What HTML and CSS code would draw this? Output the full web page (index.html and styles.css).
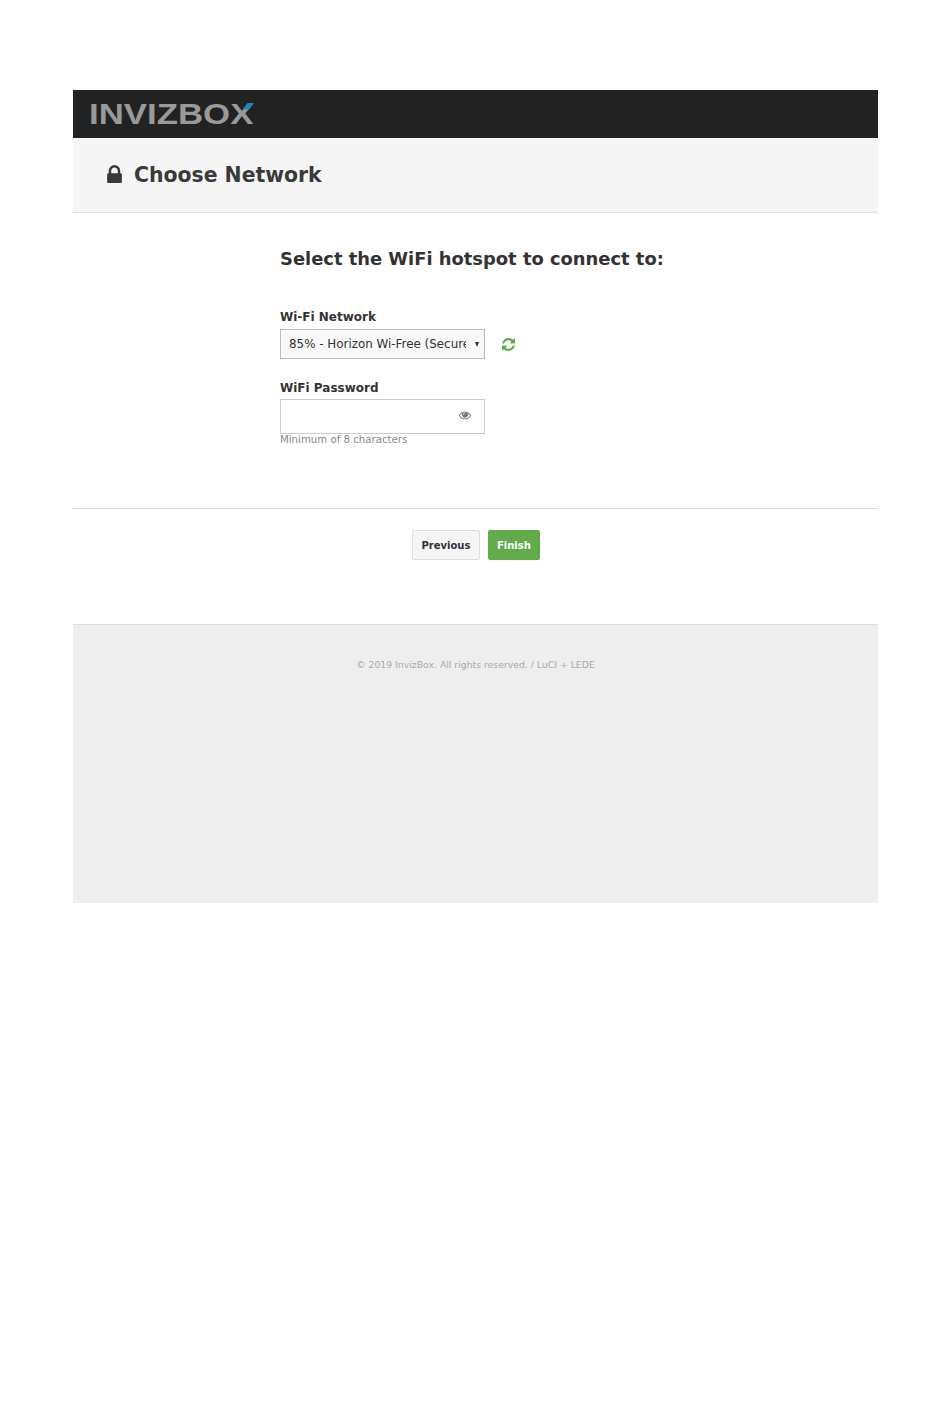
FILE: index.html
```html
<!DOCTYPE html>
<html lang="en">
<head>
    <meta charset="UTF-8">
    <meta name="viewport" content="width=device-width, initial-scale=1.0">
    <title>Choose Network</title>
    <link rel="stylesheet" href="styles.css">
</head>
<body>
    <div class="wrapper">
        <header class="topbar">
            <div class="logo">INVIZBOX<span class="logo-accent"></span></div>
        </header>

        <div class="title-band">
            <svg class="lock-icon" viewBox="0 128 1152 1408" width="15" height="18" aria-hidden="true">
                <path fill="#3a3a3a" d="M320 768h512v-192q0-106-75-181t-181-75-181 75-75 181v192zm832 96v576q0 40-28 68t-68 28h-960q-40 0-68-28t-28-68v-576q0-40 28-68t68-28h32v-192q0-184 132-316t316-132 316 132 132 316v192h32q40 0 68 28t28 68z"/>
            </svg>
            <h1>Choose Network</h1>
        </div>

        <form class="network-form">
            <h2>Select the WiFi hotspot to connect to:</h2>

            <label class="field-label" for="network">Wi-Fi Network</label>
            <div class="network-row">
                <div class="select-box" id="network">
                    <span class="select-text">85% - Horizon Wi-Free (Secured)</span>
                    <span class="select-arrow"></span>
                </div>
                <svg class="refresh-icon" viewBox="0 0 1536 1536" width="13" height="13" aria-hidden="true">
                    <path fill="#62ab4b" d="M1511 928q0 5-1 7-64 268-268 434.500t-478 166.500q-146 0-282.500-55t-243.500-157l-129 129q-19 19-45 19t-45-19-19-45v-448q0-26 19-45t45-19h448q26 0 45 19t19 45-19 45l-137 137q71 66 161 102t187 36q134 0 250-65t186-179q11-17 53-117 8-23 30-23h192q13 0 22.500 9.500t9.500 22.500zm25-800v448q0 26-19 45t-45 19h-448q-26 0-45-19t-19-45 19-45l138-138q-148-137-349-137-134 0-250 65t-186 179q-11 17-53 117-8 23-30 23h-199q-13 0-22.500-9.500t-9.500-22.500v-7q65-268 270-434.500t480-166.500q146 0 284 55.500t245 156.500l130-129q19-19 45-19t45 19 19 45z"/>
                </svg>
            </div>

            <label class="field-label field-label-tight" for="password">WiFi Password</label>
            <div class="password-box">
                <input type="password" id="password">
                <svg class="eye-icon" viewBox="0 320 1792 1280" width="12" height="9" aria-hidden="true">
                    <path fill="#777" d="M1664 960q-152-236-381-353 61 104 61 225 0 185-131.500 316.500t-316.500 131.500-316.500-131.500-131.500-316.500q0-121 61-225-229 117-381 353 133 205 333.500 326.500t434.500 121.500 434.500-121.500 333.500-326.500zm-720-384q0-20-14-34t-34-14q-125 0-214.500 89.500t-89.500 214.500q0 20 14 34t34 14 34-14 14-34q0-86 61-147t147-61q20 0 34-14t14-34zm848 384q0 34-20 69-140 230-376.500 368.500t-499.500 138.500-499.500-139-376.500-368q-20-35-20-69t20-69q140-229 376.500-368t499.500-139 499.500 139 376.500 368q20 35 20 69z"/>
                </svg>
            </div>
            <div class="hint">Minimum of 8 characters</div>
        </form>

        <div class="actions">
            <button type="button" class="btn btn-default">Previous</button>
            <button type="button" class="btn btn-success">Finish</button>
        </div>

        <footer class="footer">© 2019 InvizBox. All rights reserved. / LuCI + LEDE</footer>
    </div>
</body>
</html>
```

FILE: styles.css
```css
body {
    margin: 0;
    background-color: #fff;
    color: #333;
    font-family: 'DejaVu Sans', sans-serif;
}

.wrapper {
    width: 805px;
    margin: 90px 0 0 73px;
}

.topbar {
    height: 48px;
    background-color: #222;
    padding-left: 16px;
    display: flex;
    align-items: center;
}

.logo {
    position: relative;
    font-family: 'Liberation Sans', sans-serif;
    font-size: 29px;
    font-weight: bold;
    line-height: 1;
    color: #999;
    transform: scaleX(1.2);
    transform-origin: left center;
}

.logo-accent {
    position: absolute;
    right: -1px;
    top: 3px;
    width: 10px;
    height: 7px;
    background-color: #1c87b0;
    clip-path: polygon(45% 0, 100% 0, 55% 100%, 0 100%);
}

.title-band {
    height: 74px;
    background-color: #f5f5f5;
    border-bottom: 1px solid #ddd;
    padding-left: 34px;
    display: flex;
    align-items: center;
}

.lock-icon {
    margin-right: 12px;
    margin-top: -2px;
}

h1 {
    margin: 0;
    font-size: 20.400px;
    font-weight: bold;
    color: #3a3a3a;
}

.network-form {
    padding: 35px 0 63px 207px;
}

h2 {
    margin: 0 0 38px;
    font-size: 17.900px;
    line-height: 22px;
    font-weight: bold;
    color: #333;
}

.field-label {
    display: block;
    height: 18px;
    margin-bottom: 3px;
    font-size: 12px;
    line-height: 18px;
    font-weight: bold;
    color: #333;
}

.field-label-tight {
    margin-bottom: 2px;
}

.network-row {
    display: flex;
    align-items: center;
    margin-bottom: 20px;
}

.select-box {
    box-sizing: border-box;
    width: 205px;
    height: 30px;
    padding-left: 8px;
    background-color: #f8f8f8;
    border: 1px solid #bbb;
    display: flex;
    align-items: center;
    font-size: 11.900px;
    color: #333;
}

.select-text {
    width: 177px;
    overflow: hidden;
    white-space: nowrap;
}

.select-arrow {
    margin-left: 9px;
    border-left: 2.500px solid transparent;
    border-right: 2.500px solid transparent;
    border-top: 5px solid #333;
}

.refresh-icon {
    margin-left: 17px;
}

.password-box {
    position: relative;
    width: 205px;
    height: 35px;
}

.password-box input {
    box-sizing: border-box;
    display: block;
    width: 100%;
    height: 100%;
    padding: 0 8px;
    background-color: #fff;
    border: 1px solid #ccc;
}

.eye-icon {
    position: absolute;
    right: 14px;
    top: 12px;
}

.hint {
    font-size: 10.200px;
    line-height: 11px;
    color: #888;
}

.actions {
    border-top: 1px solid #ddd;
    height: 116px;
    padding: 21px 0 0 339px;
    box-sizing: border-box;
    display: flex;
    align-items: flex-start;
    gap: 8px;
}

.btn {
    height: 30px;
    padding: 0 8px;
    border-radius: 2px;
    font-family: 'DejaVu Sans', sans-serif;
    font-size: 10px;
    font-weight: bold;
}

.btn-default {
    padding: 0 8.500px;
    background-color: #f5f5f5;
    border: 1px solid #ddd;
    color: #333;
}

.btn-success {
    background-color: #62ab4b;
    border: 1px solid #62ab4b;
    color: #fff;
}

.footer {
    box-sizing: border-box;
    height: 279px;
    padding-top: 33px;
    background-color: #eee;
    border-top: 1px solid #ddd;
    text-align: center;
    font-size: 9.300px;
    line-height: 14px;
    color: #aaa;
}
```
